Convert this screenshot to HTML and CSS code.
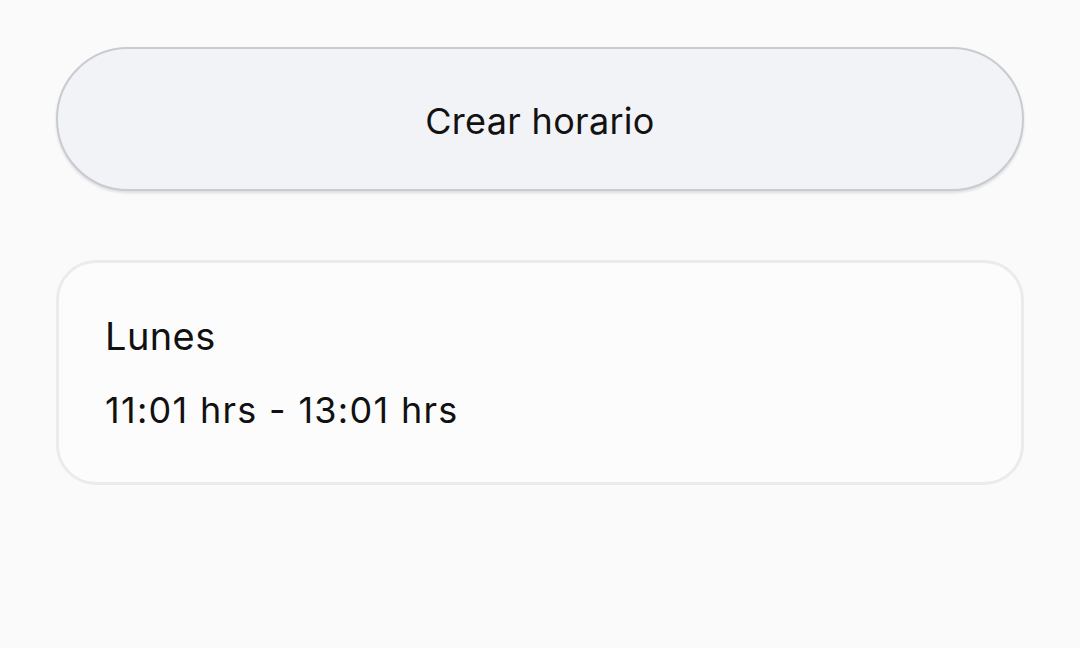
FILE: index.html
```html
<!DOCTYPE html>
<html lang="es">
<head>
<meta charset="utf-8">
<link rel="stylesheet" href="styles.css">
</head>
<body>
<main class="page">
  <button class="create-btn">Crear horario</button>
  <section class="card">
    <div class="day">Lunes</div>
    <div class="time">11:01 hrs - 13:01 hrs</div>
  </section>
</main>
</body>
</html>
```

FILE: styles.css
```css
html, body {
  margin: 0;
  padding: 0;
  background: #fafafa;
  font-family: Inter, "Noto Sans", sans-serif;
  color: #111;
}
.page {
  padding: 47px 56px 0 56px;
  display: flex;
  flex-direction: column;
  gap: 69px;
}
.create-btn {
  box-sizing: border-box;
  height: 144px;
  width: 100%;
  border-radius: 72px;
  border: 2px solid #c9cbd2;
  background: #f2f3f7;
  box-shadow: 0 2px 3px rgba(0,0,0,0.12);
  font-family: inherit;
  font-size: 36px;
  font-weight: 430;
  letter-spacing: 0.3px;
  color: #121212;
  padding: 3px 0 0 0;
}
.card {
  box-sizing: border-box;
  height: 225px;
  border: 3px solid #ebebeb;
  border-radius: 40px;
  background: #fcfcfc;
  padding: 50px 46px 0;
  display: flex;
  flex-direction: column;
  gap: 28px;
}
.day {
  font-size: 38px;
  font-weight: 430;
  line-height: 46px;
  letter-spacing: 0.4px;
}
.time {
  font-size: 36px;
  font-weight: 430;
  line-height: 46px;
  letter-spacing: 1.3px;
}
```
